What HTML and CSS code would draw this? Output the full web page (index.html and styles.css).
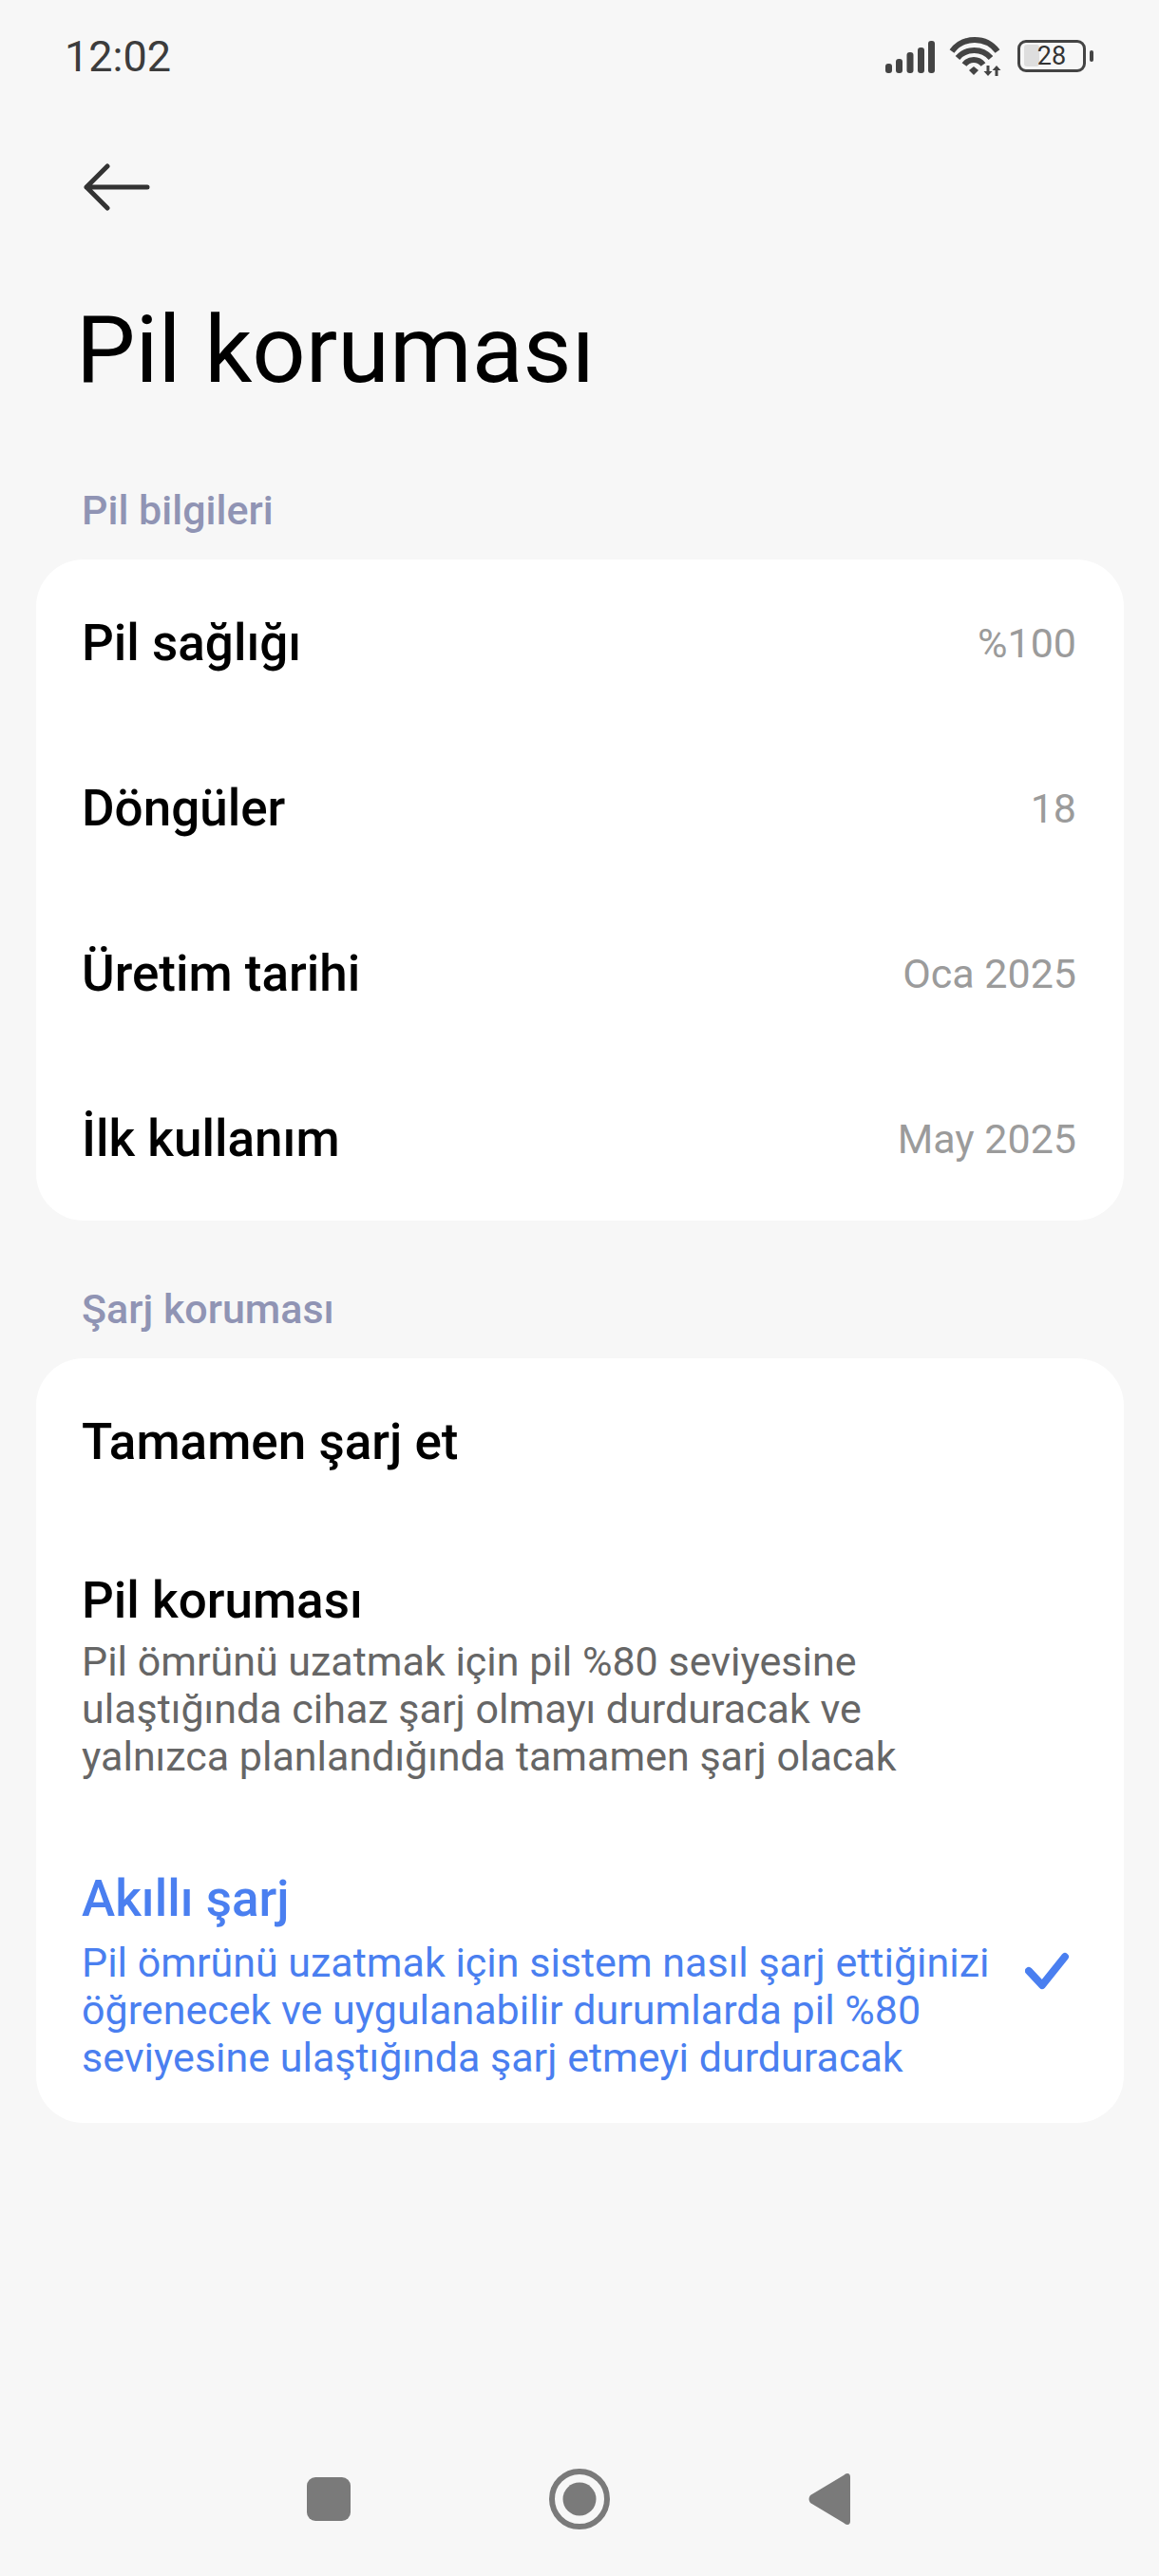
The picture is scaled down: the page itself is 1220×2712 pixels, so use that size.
FILE: index.html
```html
<!DOCTYPE html>
<html lang="tr">
<head>
    <meta charset="UTF-8">
    <meta name="viewport" content="width=device-width, initial-scale=1.0">
    <title>Pil koruması</title>
    <link rel="stylesheet" href="styles.css">
</head>
<body>

<div class="phone">
    <div class="status-bar">
        <span class="clock">12:02</span>
        <div class="status-icons">
            <svg class="signal-icon" width="52" height="34" viewBox="0 0 52 34">
                <rect x="0" y="24" width="7" height="10" rx="3" />
                <rect x="11" y="19" width="7" height="15" rx="3" />
                <rect x="22.5" y="12" width="7" height="22" rx="3" />
                <rect x="34" y="7" width="7" height="27" rx="3" />
                <rect x="45" y="0" width="7" height="34" rx="3" />
            </svg>
            <svg class="wifi-icon" width="58" height="42" viewBox="0 0 58 42">
                <path d="M5 15 A30 30 0 0 1 53 15" />
                <path d="M11 22 A23 23 0 0 1 46 22" />
                <path d="M18 29 A12.5 12.5 0 0 1 38 29" />
                <path class="wifi-solid" d="M28 31 L33 35 L28 40 L23 35 Z" />
                <path class="wifi-solid" d="M41.5 30 h3 v6 h3 l-4.5 5 l-4.5 -5 h3 Z" />
                <path class="wifi-solid" d="M50.5 41 h3 v-6 h3 l-4.5 -5 l-4.5 5 h3 Z" />
            </svg>
            <div class="battery">
                <div class="battery-body">
                    <div class="battery-fill"></div>
                    <span class="battery-level">28</span>
                </div>
                <div class="battery-cap"></div>
            </div>
        </div>
    </div>

    <div class="back-row">
        <svg width="70" height="50" viewBox="0 0 70 50">
            <path class="back-arrow" d="M67 25 H3 M25 3 L3 25 L25 47" />
        </svg>
    </div>

    <h1 class="page-title">Pil koruması</h1>

    <div class="section-label">Pil bilgileri</div>
    <div class="card">
        <div class="info-row"><span class="row-title">Pil sağlığı</span><span class="row-value">%100</span></div>
        <div class="info-row"><span class="row-title">Döngüler</span><span class="row-value">18</span></div>
        <div class="info-row"><span class="row-title">Üretim tarihi</span><span class="row-value">Oca 2025</span></div>
        <div class="info-row"><span class="row-title">İlk kullanım</span><span class="row-value">May 2025</span></div>
    </div>

    <div class="section-label section-label-second">Şarj koruması</div>
    <div class="card card-options">
        <div class="option option-plain">
            <div class="option-text">
                <div class="row-title">Tamamen şarj et</div>
            </div>
        </div>
        <div class="option">
            <div class="option-text">
                <div class="row-title">Pil koruması</div>
                <p class="option-desc">Pil ömrünü uzatmak için pil %80 seviyesine<br>ulaştığında cihaz şarj olmayı durduracak ve<br>yalnızca planlandığında tamamen şarj olacak</p>
            </div>
        </div>
        <div class="option option-selected">
            <div class="option-text">
                <div class="row-title">Akıllı şarj</div>
                <p class="option-desc">Pil ömrünü uzatmak için sistem nasıl şarj ettiğinizi<br>öğrenecek ve uygulanabilir durumlarda pil %80<br>seviyesine ulaştığında şarj etmeyi durduracak</p>
            </div>
            <svg class="check-icon" width="48" height="42" viewBox="0 0 48 42">
                <path d="M4 21 L18 36 L42 6" />
            </svg>
        </div>
    </div>

    <div class="nav-bar">
        <svg width="46" height="46" viewBox="0 0 46 46"><rect width="46" height="46" rx="9" /></svg>
        <svg width="64" height="64" viewBox="0 0 64 64">
            <circle class="nav-ring" cx="32" cy="32" r="29" />
            <circle cx="32" cy="32" r="17.5" />
        </svg>
        <svg width="44" height="54" viewBox="0 0 44 54">
            <path d="M41 0 Q44 0 44 4 V50 Q44 54 41 54 Q39 54 37 52 L2 31 Q-1 27 2 23 L37 2 Q39 0 41 0 Z" />
        </svg>
    </div>
</div>

</body>
</html>
```

FILE: styles.css
```css
body {
    margin: 0;
    background-color: #f7f7f7;
    font-family: Roboto, "Noto Sans", sans-serif;
    color: #000;
}
.phone {
    width: 1220px;
    height: 2712px;
    display: flex;
    flex-direction: column;
    position: relative;
    overflow: hidden;
}
.status-bar {
    height: 122px;
    box-sizing: border-box;
    padding: 34px 69px 0 68px;
    display: flex;
    justify-content: space-between;
    align-items: flex-start;
}
.clock {
    font-size: 45px;
    line-height: 52px;
    color: #3c3c3c;
}
.status-icons {
    display: flex;
    align-items: flex-start;
    gap: 13px;
    padding-top: 5px;
}
.signal-icon {
    fill: #444;
    margin-top: 4px;
}
.wifi-icon {
    fill: none;
    stroke: #444;
    stroke-width: 6;
    margin-right: 3px;
}
.wifi-solid {
    fill: #444;
    stroke: none;
}
.battery {
    display: flex;
    align-items: center;
    gap: 4px;
    margin-top: 3px;
}
.battery-body {
    width: 72px;
    height: 34px;
    box-sizing: border-box;
    border: 3px solid #444;
    border-radius: 9px;
    position: relative;
    display: flex;
    justify-content: center;
    align-items: center;
}
.battery-fill {
    position: absolute;
    left: 4px;
    top: 2px;
    bottom: 3px;
    width: 16px;
    background-color: #dedede;
    border-radius: 3px;
}
.battery-level {
    position: relative;
    font-size: 27px;
    line-height: 30px;
    color: #333;
}
.battery-cap {
    width: 4px;
    height: 12px;
    background-color: #444;
    border-radius: 2px;
}
.back-row {
    height: 50px;
    padding-left: 88px;
    margin-top: 50px;
}
.back-arrow {
    fill: none;
    stroke: #333;
    stroke-width: 5;
    stroke-linecap: round;
    stroke-linejoin: round;
}
.page-title {
    margin: 86px 0 0 80px;
    font-size: 99px;
    line-height: 120px;
    font-weight: 400;
}
.section-label {
    margin: 85px 0 0 86px;
    height: 48px;
    font-size: 43px;
    line-height: 48px;
    font-weight: 500;
    color: #9094b4;
}
.section-label-second {
    margin-top: 69px;
}
.card {
    margin: 28px 37px 0 38px;
    background-color: #fff;
    border-radius: 50px;
    overflow: hidden;
}
.info-row {
    height: 174px;
    box-sizing: border-box;
    padding: 2px 50px 0 48px;
    display: flex;
    justify-content: space-between;
    align-items: center;
}
.row-title {
    font-size: 53px;
    line-height: 60px;
    font-weight: 500;
}
.row-value {
    font-size: 43px;
    color: #9b9b9b;
}
.card-options {
    padding-bottom: 44px;
}
.option {
    display: flex;
    align-items: center;
    justify-content: space-between;
    padding: 0 56px 0 48px;
    margin-top: 51px;
}
.option-plain {
    height: 174px;
    box-sizing: border-box;
    padding-top: 2px;
    margin-top: 0;
}
.option-desc {
    margin: 9px 0 0;
    font-size: 43px;
    line-height: 50px;
    color: #666;
}
.option-selected {
    margin-top: 95px;
}
.option-selected .option-desc {
    margin-top: 12px;
}
.option-selected .row-title,
.option-selected .option-desc {
    color: #4a7ff0;
}
.check-icon {
    fill: none;
    stroke: #4a7ff0;
    stroke-width: 8;
    stroke-linecap: round;
    stroke-linejoin: round;
    margin-bottom: 10px;
}
.nav-bar {
    position: absolute;
    left: 323px;
    top: 2599px;
    width: 572px;
    display: flex;
    justify-content: space-between;
    align-items: center;
    fill: #7a7a7a;
}
.nav-ring {
    fill: none;
    stroke: #7a7a7a;
    stroke-width: 6;
}
```
